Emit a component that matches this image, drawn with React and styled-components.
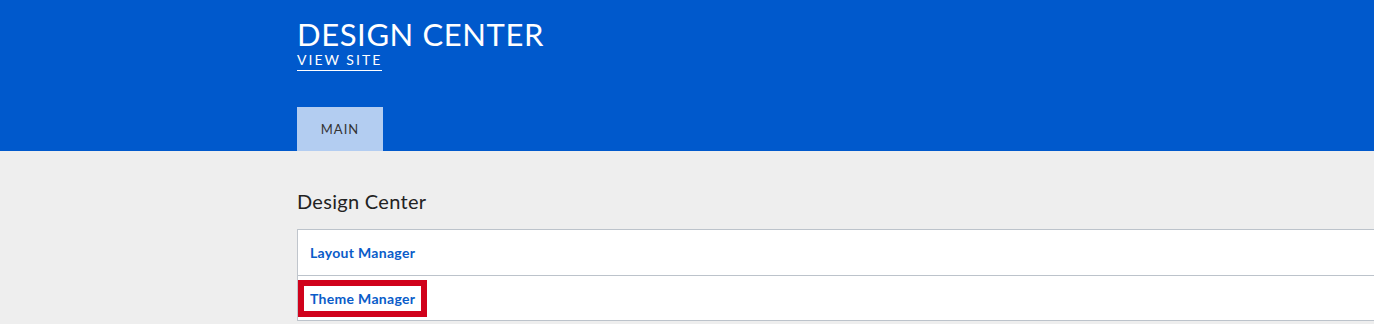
import React from "react";
import styled, { createGlobalStyle } from "styled-components";

const Global = createGlobalStyle`
  html, body { margin: 0; padding: 0; background: #eeeeee; overflow: hidden; }
  body { font-family: Lato, "Liberation Sans", sans-serif; }
`;

const Header = styled.header`
  background: #0059cc;
  padding: 17px 0 0 297px;
  height: 151px;
  box-sizing: border-box;
  display: flex;
  flex-direction: column;
`;

const Title = styled.h1`
  margin: 0;
  color: #ffffff;
  font-size: 31px;
  font-weight: 400;
  letter-spacing: 0.6px;
  line-height: 34px;
`;

const SiteLink = styled.a`
  align-self: flex-start;
  color: #ffffff;
  font-size: 14px;
  letter-spacing: 2px;
  line-height: 16px;
  text-decoration: none;
  border-bottom: 1px solid #ffffff;
  padding-bottom: 2px;
  margin-top: 1px;
`;

const Tabs = styled.nav`
  margin-top: auto;
  display: flex;
`;

const Tab = styled.div`
  width: 86px;
  height: 44px;
  display: flex;
  align-items: center;
  justify-content: center;
  background: ${(p) => (p.$active ? "#b3cdf1" : "transparent")};
  color: #333333;
  font-size: 13px;
  letter-spacing: 1px;
`;

const Main = styled.main`
  padding: 36px 0 0 297px;
`;

const Heading = styled.h2`
  margin: 0 0 14px;
  font-size: 20px;
  font-weight: 400;
  letter-spacing: 0.3px;
  color: #222222;
  line-height: 28px;
`;

const List = styled.ul`
  list-style: none;
  margin: 0;
  padding: 0;
  background: #ffffff;
  border-left: 1px solid #c0c5cc;
  width: 1200px;
`;

const Row = styled.li`
  height: 46px;
  border-top: 1px solid #bcc3cb;
  box-sizing: border-box;
  display: flex;
  align-items: center;
  &:last-child { border-bottom: 1px solid #bcc3cb; }
`;

const ItemLink = styled.a`
  margin-left: ${(p) => (p.$highlight ? "0" : "12px")};
  color: #0a5cc9;
  font-weight: 700;
  font-size: 14px;
  letter-spacing: 0.3px;
  text-decoration: none;
  ${(p) =>
    p.$highlight &&
    `
    border: 6px solid #d0021b;
    padding: 4px 6px 4px 6px;
    line-height: 17px;
  `}
`;

export default function App() {
  return (
    <>
      <Global />
      <Header>
        <Title>DESIGN CENTER</Title>
        <SiteLink href="#">VIEW SITE</SiteLink>
        <Tabs>
          <Tab $active>MAIN</Tab>
        </Tabs>
      </Header>
      <Main>
        <Heading>Design Center</Heading>
        <List>
          <Row>
            <ItemLink href="#">Layout Manager</ItemLink>
          </Row>
          <Row>
            <ItemLink href="#" $highlight>Theme Manager</ItemLink>
          </Row>
        </List>
      </Main>
    </>
  );
}
